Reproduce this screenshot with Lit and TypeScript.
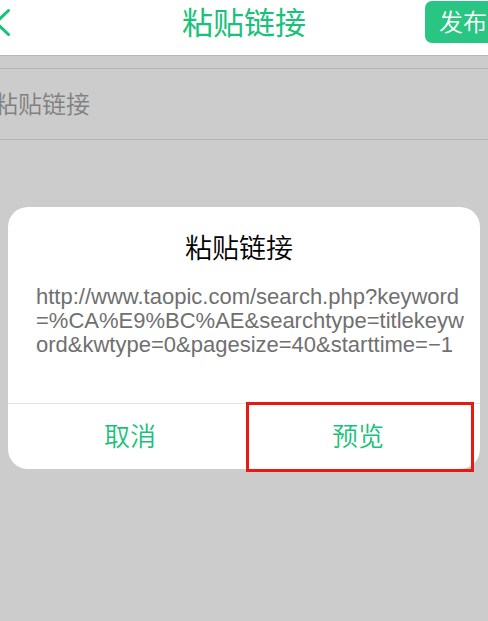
import { LitElement, html, css } from "lit";
import { customElement } from "lit/decorators.js";

@customElement("app-root")
export class AppRoot extends LitElement {
  static styles = css`
    :host {
      display: flex;
      flex-direction: column;
      min-height: 100vh;
      overflow: hidden;
      background: #ccc;
      font-family: "Liberation Sans", "Noto Sans CJK SC", sans-serif;
      --green: #18c27b;
    }
    * {
      box-sizing: border-box;
    }
    button,
    input {
      font: inherit;
      border: 0;
      padding: 0;
      margin: 0;
      background: none;
    }
    h1,
    h2,
    p {
      margin: 0;
      font-weight: 350;
    }
    .bar {
      display: grid;
      grid-template-columns: 1fr auto 1fr;
      height: 56px;
      background: #fff;
      border-bottom: 1px solid #b8b8b8;
    }
    .back {
      justify-self: start;
      align-self: start;
      margin: 8px 0 0 -8px;
      color: var(--green);
    }
    .back svg {
      display: block;
    }
    .title {
      color: var(--green);
      font-size: 31px;
      line-height: 48px;
      font-weight: 400;
    }
    .publish {
      justify-self: end;
      align-self: start;
      width: 80px;
      height: 42px;
      margin: 1px -17px 0 0;
      padding-right: 4px;
      border-radius: 7px;
      background: #28c583;
      color: #fff;
      font-size: 24px;
      line-height: 44px;
      font-weight: 350;
      white-space: nowrap;
    }
    .field {
      display: block;
      margin-top: 12px;
      border-top: 1px solid #b4b4b4;
      border-bottom: 1px solid #b4b4b4;
    }
    .input {
      display: block;
      width: 100%;
      height: 70px;
      margin-left: -6px;
      padding-top: 2px;
      font-size: 24px;
      font-weight: 350;
      outline: 0;
    }
    .input::placeholder {
      color: #808080;
      opacity: 1;
    }
    .dialog {
      margin: 67px 8px 0;
      border-radius: 20px;
      background: #fff;
    }
    .heading {
      padding: 22px 10px 0 0;
      text-align: center;
      font-size: 27px;
      line-height: 40px;
      color: #000;
    }
    .url {
      min-height: 118px;
      margin: 16px 12px 0 28px;
      font-size: 22px;
      line-height: 24px;
      color: #707070;
      word-break: break-all;
    }
    .actions {
      display: grid;
      grid-template-columns: 1fr 1fr;
      padding: 0 8px;
      border-top: 1px solid #e4e4e4;
    }
    .action {
      position: relative;
      height: 65px;
      padding-bottom: 4px;
      color: var(--green);
      font-size: 26px;
      font-weight: 350;
    }
    .marked::after {
      content: "";
      position: absolute;
      inset: -2px -2px -3px 2px;
      border: 3px solid #e61a12;
    }
  `;

  render() {
    return html`
      <header class="bar">
        <button class="back" aria-label="返回">
          <svg width="20" height="30" viewBox="0 0 20 30" fill="none" stroke="currentColor" stroke-width="3" stroke-linecap="round">
            <path d="M16.5 2.5 L4 14.5 L16.5 26.5" />
          </svg>
        </button>
        <h1 class="title">粘贴链接</h1>
        <button class="publish">发布</button>
      </header>
      <label class="field">
        <input class="input" type="url" placeholder="粘贴链接" aria-label="粘贴链接" />
      </label>
      <section class="dialog" role="dialog" aria-labelledby="heading">
        <h2 class="heading" id="heading">粘贴链接</h2>
        <p class="url">http://www.taopic.com/search.php?keyword=%CA%E9%BC%AE&amp;searchtype=titlekeyword&amp;kwtype=0&amp;pagesize=40&amp;starttime=−1</p>
        <div class="actions">
          <button class="action">取消</button>
          <button class="action marked">预览</button>
        </div>
      </section>
    `;
  }
}
